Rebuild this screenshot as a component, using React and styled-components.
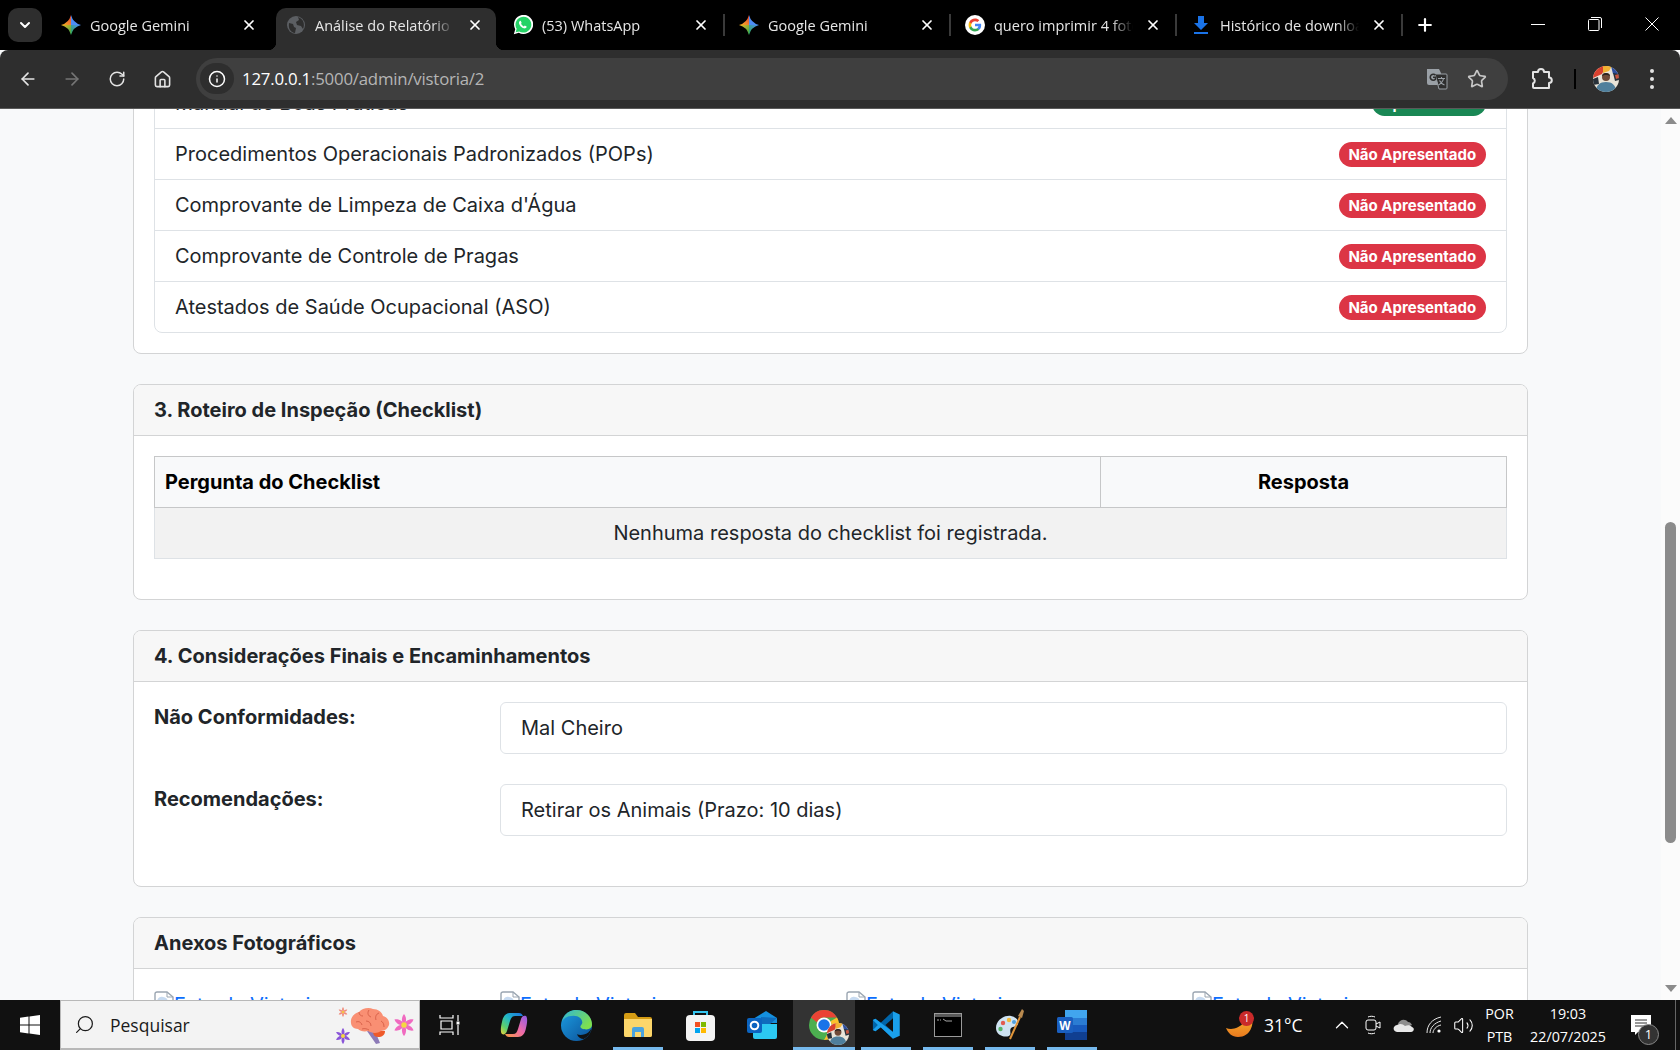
import React from "react";
import styled, { createGlobalStyle } from "styled-components";
import {
  ArrowLeft,
  ArrowRight,
  RotateCw,
  House,
  Star,
  ChevronDown,
  ChevronUp,
  X,
  Plus,
  Volume2,
  Search,
  Info,
} from "lucide-react";

const UI_FONT = `"Open Sans", "Noto Sans", "Liberation Sans", sans-serif`;

const GlobalStyle = createGlobalStyle`
  html, body {
    margin: 0;
    padding: 0;
    height: 100%;
    overflow: hidden;
    background: #f8f9fa;
  }
  * { box-sizing: border-box; }
`;

const GeminiIcon = () => (
  <svg width="21" height="22" viewBox="0 0 24 24">
    <defs>
      <linearGradient id="gemTL" x1="0" y1="1" x2="1" y2="0">
        <stop offset="0" stopColor="#f6b51e" />
        <stop offset="1" stopColor="#e8453c" />
      </linearGradient>
      <linearGradient id="gemBL" x1="0" y1="0" x2="1" y2="1">
        <stop offset="0" stopColor="#f6b51e" />
        <stop offset="1" stopColor="#2fa84f" />
      </linearGradient>
      <linearGradient id="gemBR" x1="1" y1="0" x2="0" y2="1">
        <stop offset="0" stopColor="#4c8df6" />
        <stop offset="1" stopColor="#2fa84f" />
      </linearGradient>
    </defs>
    <path fill="url(#gemTL)" d="M12 0Q9.500 9.500 0 12H12z" />
    <path fill="#4c8df6" d="M12 0Q14.500 9.500 24 12H12z" />
    <path fill="url(#gemBL)" d="M0 12Q9.500 14.500 12 24V12z" />
    <path fill="url(#gemBR)" d="M24 12Q14.500 14.500 12 24V12z" />
  </svg>
);

const GlobeIcon = () => (
  <svg width="20" height="20" viewBox="0 0 20 20">
    <circle cx="10" cy="10" r="9" fill="#5c5f63" />
    <path fill="#2e2e2e" d="M3 8l4 1 1 3 2 1-1 5c-4-.5-7-4-6-10zM12 2l1 3-3 2 1 3 4 1 2 3c2-4 1-10-5-12z" />
  </svg>
);

const WhatsAppIcon = () => (
  <svg width="20" height="20" viewBox="0 0 24 24">
    <path fill="#fff" d="M1 23l1.700-6A11.500 11.500 0 1 1 7 21.300z" />
    <path fill="#25d366" d="M3.200 20.800l1.200-4.200A9.500 9.500 0 1 1 7.500 19.700z" />
    <path fill="#fff" d="M9 7c-.4 0-1 .2-1.400.9-.7 1.100-.6 2.600.6 4.300 1.400 2 3 3.200 5 3.800 1.300.4 2.500-.2 3-1.200.2-.5.2-1 .1-1.100l-2.200-1.100-1 1.200c-1.500-.6-2.700-1.700-3.500-3.200l.8-1-1-2.400c-.1-.2-.3-.2-.4-.2z" />
  </svg>
);

const GoogleIcon = () => (
  <svg width="22" height="22" viewBox="0 0 24 24">
    <circle cx="12" cy="12" r="12" fill="#fff" />
    <g transform="translate(3.6 3.6) scale(.7)">
      <path fill="#4285F4" d="M22.56 12.25c0-.78-.07-1.53-.2-2.25H12v4.26h5.92c-.26 1.37-1.04 2.53-2.21 3.31v2.77h3.57c2.08-1.92 3.28-4.74 3.28-8.09z" />
      <path fill="#34A853" d="M12 23c2.97 0 5.46-.98 7.28-2.66l-3.57-2.77c-.98.66-2.23 1.06-3.71 1.06-2.86 0-5.29-1.93-6.16-4.53H2.18v2.84C3.99 20.53 7.7 23 12 23z" />
      <path fill="#FBBC05" d="M5.84 14.09c-.22-.66-.35-1.36-.35-2.09s.13-1.43.35-2.09V7.07H2.18C1.43 8.55 1 10.22 1 12s.43 3.45 1.18 4.93l3.66-2.84z" />
      <path fill="#EA4335" d="M12 5.38c1.62 0 3.06.56 4.21 1.64l3.15-3.15C17.45 2.09 14.97 1 12 1 7.7 1 3.99 3.47 2.18 7.07l3.66 2.84c.87-2.6 3.3-4.53 6.16-4.53z" />
    </g>
  </svg>
);

const DownloadIcon = () => (
  <svg width="18" height="20" viewBox="0 0 18 20">
    <path fill="#1a73e8" d="M6 1h6v7h4l-7 7-7-7h4zM2 17h14v2H2z" />
  </svg>
);

const TranslateIcon = () => (
  <svg width="22" height="22" viewBox="0 0 22 22">
    <path fill="#9aa0a6" d="M1 1h12l2 4v12H3a2 2 0 0 1-2-2z" />
    <path fill="#2e2e2e" stroke="#9aa0a6" strokeWidth="1" d="M9 6h11a1 1 0 0 1 1 1v13a1 1 0 0 1-1 1h-7z" />
    <path fill="none" stroke="#2e2e2e" strokeWidth="1.6" d="M9.5 7.2A3 3 0 1 0 9.5 11.2L9.5 9.3H7" />
    <path fill="none" stroke="#9aa0a6" strokeWidth="1.1" d="M12 10.5h7M15.5 9v1.5M17.5 10.5c-.5 3-2.5 5-5 6.5M13.5 12.5c1 2 2.5 3.5 5 4.5" />
  </svg>
);

const ExtensionIcon = () => (
  <svg width="24" height="24" viewBox="0 0 24 24" fill="none" stroke="#e3e3e3" strokeWidth="2" strokeLinejoin="round">
    <path d="M4 5h5a3 3 0 0 1 6 0h5v5.500a2.800 2.800 0 0 1 0 5.600V21H5a1 1 0 0 1-1-1v-3.500a3 3 0 0 0 0-5.500z" />
  </svg>
);

const Avatar = ({ size = 26 }) => (
  <svg width={size} height={size} viewBox="0 0 26 26">
    <defs>
      <clipPath id={`av${size}`}>
        <circle cx="13" cy="13" r="13" />
      </clipPath>
    </defs>
    <g clipPath={`url(#av${size})`}>
      <rect width="26" height="26" fill="#e9e4d8" />
      <path fill="#d9412f" d="M0 0h13L9 8 0 12z" />
      <path fill="#f2b233" d="M10 0h9l-3 5-6 2z" />
      <path fill="#2e4f9e" d="M18 0h8v9l-6-1z" />
      <path fill="#27313a" d="M20 7l6 1v6l-4 1zM0 13l5-2 1 7-6 1z" />
      <path fill="#c9553f" d="M22 9l4-1v4l-3 1z" />
      <circle cx="13" cy="11" r="4" fill="#6f4a38" />
      <path fill="#2b2320" d="M9 10c0-4 8-4 8 0-2-1.500-6-1.500-8 0z" />
      <path fill="#4f7f9c" d="M3 26c0-7 4-10 10-10s10 3 10 10z" />
    </g>
  </svg>
);

const WindowsLogo = () => (
  <svg width="20" height="20" viewBox="0 0 20 20">
    <path fill="#fff" d="M0 2.800l8.500-1.200v8H0zM9.500 1.400L20 0v9.600H9.500zM0 10.600h8.500v8L0 17.300zM9.500 10.600H20V20L9.500 18.600z" />
  </svg>
);

const Flower = ({ size, petal, core }) => (
  <svg width={size} height={size} viewBox="0 0 24 24">
    {[0, 60, 120, 180, 240, 300].map((a) => (
      <path key={a} fill={petal} transform={`rotate(${a} 12 12)`} d="M12 12C8.500 8 9.500 3 12 0c2.500 3 3.500 8 0 12z" />
    ))}
    <circle cx="12" cy="12" r="3" fill={core} />
  </svg>
);

const BrainIcon = () => (
  <svg width="42" height="38" viewBox="0 0 42 38">
    <path fill="#8d7bb8" d="M18 24l8 0 5 12-4 1z" />
    <path fill="#ef5a2a" d="M24 24h12c0 4-3 6-7 6s-5-3-5-6z" />
    <path fill="#f98f73" d="M2 16C1 10 6 6 10 5c3-4 10-5 14-3 5 0 9 3 10 7 4 1 7 5 6 9-1 3-4 6-8 6-4 3-10 2-13 0-4 1-8 0-10-2-4 0-7-3-7-6z" />
    <path fill="none" stroke="#d9634b" strokeWidth="1" d="M10 5c0 3 2 4 4 4M20 3c-2 3-1 6 2 7M30 6c-3 1-4 4-3 7M7 15c3-1 5 0 6 3M17 14c3 0 5 2 5 5M32 14c2 1 3 3 3 6M13 22c3-1 5 0 7 1" />
  </svg>
);

const TaskViewIcon = () => (
  <TaskViewGlyph width="22" height="20" viewBox="0 0 22 20" fill="none" stroke="#fff" strokeWidth="1.2">
    <path d="M1 0v3h13V0M1 20v-3h13v3M2 6h11v8H2z" />
    <path d="M19 0v6M19 10v10" />
    <rect x="17.5" y="6.5" width="3" height="3" fill="#fff" stroke="none" />
  </TaskViewGlyph>
);

const CopilotIcon = () => (
  <svg width="28" height="26" viewBox="0 0 28 26">
    <defs>
      <linearGradient id="co1" x1="1" y1="0" x2="0" y2="1">
        <stop offset="0" stopColor="#1b6fe0" />
        <stop offset="0.45" stopColor="#22b8c8" />
        <stop offset="0.75" stopColor="#5fce6a" />
        <stop offset="1" stopColor="#f4d43c" />
      </linearGradient>
      <linearGradient id="co2" x1="1" y1="0" x2="0" y2="1">
        <stop offset="0" stopColor="#f59a3f" />
        <stop offset="0.5" stopColor="#ef6ba8" />
        <stop offset="1" stopColor="#8f5be8" />
      </linearGradient>
    </defs>
    <path fill="url(#co1)" d="M2 10C3 4 6 1 10 1h9c2 0 3 1 4 3h-8c-3 0-4 2-5 5l-3 10c-1 3-3 4-5 3-2-2-1-8 0-12z" />
    <path fill="url(#co2)" transform="rotate(180 14 13)" d="M2 10C3 4 6 1 10 1h9c2 0 3 1 4 3h-8c-3 0-4 2-5 5l-3 10c-1 3-3 4-5 3-2-2-1-8 0-12z" />
  </svg>
);

const EdgeIcon = () => (
  <svg width="31" height="31" viewBox="0 0 32 32">
    <defs>
      <linearGradient id="ed1" x1="0" y1="0" x2="1" y2="1">
        <stop offset="0" stopColor="#1b9de2" />
        <stop offset="1" stopColor="#0c4f96" />
      </linearGradient>
      <linearGradient id="ed2" x1="0" y1="0" x2="1" y2="0.6">
        <stop offset="0" stopColor="#2fb5d6" />
        <stop offset="1" stopColor="#7ee04e" />
      </linearGradient>
    </defs>
    <circle cx="16" cy="16" r="16" fill="url(#ed1)" />
    <path fill="url(#ed2)" d="M1 12C3 4 9 0 16 0c9 0 16 7 16 15 0 3-2 5-6 5-3 0-6-1-6-3 0-1 2-2 2-4 0-4-4-7-9-7C7 6 3 8 1 12z" />
    <path fill="#111" d="M31.500 19c-1 5-4 9-8 11-3 0-6-2-7-5 2 1 5 1 8 0 3-1 5-3 7-6z" />
  </svg>
);

const FolderIcon = () => (
  <svg width="28" height="26" viewBox="0 0 28 26">
    <path fill="#d59c14" d="M0 3a2 2 0 0 1 2-2h9l3 4h12a2 2 0 0 1 2 2v16a2 2 0 0 1-2 2H2a2 2 0 0 1-2-2z" />
    <path fill="#fcd66b" d="M0 7h28v16a2 2 0 0 1-2 2H2a2 2 0 0 1-2-2z" />
    <path fill="#4aa3df" d="M8 17a2 2 0 0 1 2-2h8a2 2 0 0 1 2 2v8h-3v-5h-6v5H8z" />
  </svg>
);

const StoreIcon = () => (
  <svg width="29" height="31" viewBox="0 0 29 31">
    <path fill="none" stroke="#35c5f0" strokeWidth="2" d="M8 7V2h13v5" />
    <rect y="5" width="29" height="26" rx="4" fill="#f4f4f4" />
    <rect x="9" y="12" width="5" height="5" fill="#f25022" />
    <rect x="15" y="12" width="5" height="5" fill="#7fba00" />
    <rect x="9" y="18" width="5" height="5" fill="#00a4ef" />
    <rect x="15" y="18" width="5" height="5" fill="#ffb900" />
  </svg>
);

const OutlookIcon = () => (
  <svg width="30" height="28" viewBox="0 0 30 28">
    <path fill="#1490df" d="M6 8l13-8 11 7v5H6z" />
    <path fill="#0f6cbd" d="M14 6l16 1-8 7H14z" />
    <path fill="#2cc9f2" d="M6 13h24v13a2 2 0 0 1-2 2H8a2 2 0 0 1-2-2z" />
    <rect y="7" width="15" height="15" rx="2" fill="#0b64c0" />
    <circle cx="7.5" cy="14.5" r="3.8" fill="none" stroke="#fff" strokeWidth="2" />
  </svg>
);

const ChromeIcon = () => (
  <svg width="30" height="30" viewBox="0 0 30 30">
    <circle cx="15" cy="15" r="15" fill="#4caf50" />
    <path fill="#ea4335" d="M2 7.500A15 15 0 0 1 28 7.500H15a7.500 7.500 0 0 0-7 5z" />
    <path fill="#fbc02d" d="M28 7.500A15 15 0 0 1 15 30l6.500-11.300a7.500 7.500 0 0 0 0-7.500z" />
    <circle cx="15" cy="15" r="7.5" fill="#fff" />
    <circle cx="15" cy="15" r="5.8" fill="#1a73e8" />
  </svg>
);

const VsCodeIcon = () => (
  <svg width="30" height="30" viewBox="0 0 24 24">
    <path fill="#0065a9" d="M17.600 1L7.800 10.200 3.500 7 1.500 8v8l2 1 4.300-3.200L17.600 23V17.500L11.500 12l6.100-5.500z" />
    <path fill="#1aa0ec" d="M17.600 1l5.400 2.500v17L17.600 23zM1.500 8l2-1 14.100 10.500V23L7.800 13.800 3.500 17l-2-1 4-4z" />
  </svg>
);

const TerminalIcon = () => (
  <svg width="28" height="24" viewBox="0 0 28 24">
    <rect x=".5" y=".5" width="27" height="23" fill="#000" stroke="#9a9a9a" />
    <rect x="1" y="1" width="26" height="3" fill="#5a5a5a" />
    <path fill="none" stroke="#cfcfcf" strokeWidth=".8" d="M3 7h2M6 7h1M9 6l3 2h6" />
  </svg>
);

const PaintIcon = () => (
  <svg width="30" height="32" viewBox="0 0 30 32">
    <path fill="#cfe3f2" d="M1 19C1 11 9 6 16 7c5 1 8 4 7 8-1 3-5 2-7 4-2 3 1 6-2 8-5 2-13-1-13-8z" />
    <circle cx="8" cy="14" r="2.2" fill="#e25b4f" />
    <circle cx="14" cy="11" r="2.2" fill="#f2b83a" />
    <circle cx="5.5" cy="20" r="2.2" fill="#58b368" />
    <circle cx="19" cy="13" r="2" fill="#4f9fdc" />
    <path stroke="#e0953a" strokeWidth="2" d="M15 30L25 8" />
    <path fill="#b98a4f" d="M23 7l4-7 2 2-2 7z" />
  </svg>
);

const WordIcon = () => (
  <svg width="30" height="30" viewBox="0 0 30 30">
    <path fill="#41a5ee" d="M8 0h22v8H8z" />
    <path fill="#2b7cd3" d="M8 8h22v7H8z" />
    <path fill="#185abd" d="M8 15h22v7H8z" />
    <path fill="#103f91" d="M8 22h22v8H8z" />
    <rect y="7" width="16" height="16" rx="1.5" fill="#1a5fc0" />
    <text x="8" y="19.5" textAnchor="middle" fill="#fff" fontSize="12" fontWeight="700" fontFamily="Liberation Sans">W</text>
  </svg>
);

const WeatherIcon = () => (
  <svg width="28" height="24" viewBox="0 0 28 24">
    <defs>
      <linearGradient id="moon" x1="0" y1="0" x2="0" y2="1">
        <stop offset="0" stopColor="#f7b22d" />
        <stop offset="1" stopColor="#e9791e" />
      </linearGradient>
    </defs>
    <path fill="url(#moon)" d="M0 15c5 2 13 1 18-6 3-3 6-5 8-6 2 8-1 21-14 21C6 24 2 20 0 15z" />
  </svg>
);

const MeetIcon = () => (
  <svg width="16" height="20" viewBox="0 0 16 20" fill="none" stroke="#fff" strokeWidth="1">
    <rect x="1" y="5" width="10" height="10" rx="2" />
    <path d="M11 9l4-2v6l-4-2M3 2c2-1 5-1 7 0M3 18c2 1 5 1 7 0" />
  </svg>
);

const CloudIcon = () => (
  <svg width="21" height="14" viewBox="0 0 21 14">
    <path fill="#8e8e8e" d="M5 6c1-4 7-6 10-2 2 0 3 1 4 3l-8 3z" />
    <path fill="#e8e8e8" d="M4 14C0 14-1 8 4 7c3-2 6-1 8 1 3-1 5-1 7 1 3 1 2 5-1 5z" />
  </svg>
);

const WifiIcon = () => (
  <svg width="16" height="18" viewBox="0 0 16 18" fill="none" stroke="#e8e8e8" strokeWidth="1">
    <path d="M1 17C1 9 6 3 15 1M4 17c0-5 4-10 11-12M7 17c0-3 3-7 8-8" />
    <circle cx="13" cy="15" r="1.6" fill="#fff" stroke="none" />
  </svg>
);

const NotifIcon = () => (
  <svg width="20" height="20" viewBox="0 0 20 20">
    <path fill="#fff" d="M0 0h20v17H7l-3 3v-3H0z" />
    <path stroke="#333" strokeWidth="1" d="M4 5h12M4 8h12M4 11h12" />
  </svg>
);

const BrokenImage = () => (
  <svg width="20" height="20" viewBox="0 0 20 20">
    <path fill="#fff" stroke="#9aa5b1" strokeWidth="1.4" d="M1 3a2 2 0 0 1 2-2h10l6 5v13H1z" />
    <path fill="#c7daf0" d="M3 10c1-4 4-5 6-4 2 0 4 1 5 4z" />
    <path fill="none" stroke="#9aa5b1" d="M13 1v5h6" />
  </svg>
);

const ChromeApp = () => (
  <ChromeBadge>
    <ChromeIcon />
    <ChromeAvatar>
      <Avatar size={22} />
    </ChromeAvatar>
  </ChromeBadge>
);

const tabs = [
  { title: "Google Gemini", icon: <GeminiIcon /> },
  { title: "Análise do Relatório de Vistoria", icon: <GlobeIcon />, active: true },
  { title: "(53) WhatsApp", icon: <WhatsAppIcon />, sep: true },
  { title: "Google Gemini", icon: <GeminiIcon />, sep: true },
  { title: "quero imprimir 4 fotos em uma", icon: <GoogleIcon />, sep: true },
  { title: "Histórico de downloads", icon: <DownloadIcon />, sep: true },
];

const apps = [
  { icon: <TaskViewIcon /> },
  { icon: <CopilotIcon /> },
  { icon: <EdgeIcon /> },
  { icon: <FolderIcon />, open: true },
  { icon: <StoreIcon /> },
  { icon: <OutlookIcon /> },
  { icon: <ChromeApp />, open: true, active: true },
  { icon: <VsCodeIcon />, open: true },
  { icon: <TerminalIcon />, open: true },
  { icon: <PaintIcon />, open: true },
  { icon: <WordIcon />, open: true },
];

const documents = [
  ["Manual de Boas Práticas", true],
  ["Procedimentos Operacionais Padronizados (POPs)", false],
  ["Comprovante de Limpeza de Caixa d'Água", false],
  ["Comprovante de Controle de Pragas", false],
  ["Atestados de Saúde Ocupacional (ASO)", false],
];

const App = () => {
  return (
    <Screen>
      <GlobalStyle />
      <TabStrip>
        <TabMenu>
          <ChevronDown size={16} strokeWidth={3} color="#fff" />
        </TabMenu>
        {tabs.map((t, i) => (
          <Tab key={i} $active={t.active}>
            <TabIcon>{t.icon}</TabIcon>
            <TabTitle>{t.title}</TabTitle>
            <TabClose>
              <X size={16} strokeWidth={2.6} color="#fff" />
            </TabClose>
            {t.sep && <TabSeparator />}
          </Tab>
        ))}
        <NewTab>
          <Plus size={20} strokeWidth={2.6} color="#fff" />
        </NewTab>
        <WindowButtons>
          <WindowButton>
            <svg width="14" height="14" viewBox="0 0 14 14">
              <path stroke="#fff" d="M0 7.5h14" />
            </svg>
          </WindowButton>
          <WindowButton>
            <svg width="14" height="14" viewBox="0 0 14 14" fill="none" stroke="#fff">
              <rect x=".5" y="2.5" width="10.5" height="11" rx="1" />
              <path d="M3 .5h9a1.5 1.5 0 0 1 1.5 1.5v9" />
            </svg>
          </WindowButton>
          <WindowButton>
            <svg width="14" height="14" viewBox="0 0 14 14">
              <path stroke="#fff" d="M.5.5l13 13M13.5.5l-13 13" />
            </svg>
          </WindowButton>
        </WindowButtons>
      </TabStrip>

      <Toolbar>
        <NavButton $w={44}>
          <ArrowLeft size={20} strokeWidth={2} color="#e3e3e3" />
        </NavButton>
        <NavButton $w={44}>
          <ArrowRight size={20} strokeWidth={2} color="#757575" />
        </NavButton>
        <NavButton $w={46}>
          <RotateCw size={18} strokeWidth={2} color="#e3e3e3" />
        </NavButton>
        <NavButton $w={44}>
          <House size={19} strokeWidth={2} color="#e3e3e3" />
        </NavButton>
        <Omnibox>
          <SiteChip>
            <Info size={18} strokeWidth={2} color="#fff" />
          </SiteChip>
          <Url>
            <strong>127.0.0.1</strong>:5000/admin/vistoria/2
          </Url>
          <OmniIcon $right={60}>
            <TranslateIcon />
          </OmniIcon>
          <OmniIcon $right={21}>
            <Star size={20} strokeWidth={2} color="#c7c7c7" />
          </OmniIcon>
        </Omnibox>
        <ToolbarRight>
          <ToolSlot $w={66}>
            <ExtensionIcon />
          </ToolSlot>
          <ToolDivider />
          <ToolSlot $w={60}>
            <Avatar />
          </ToolSlot>
          <ToolDots>
            <span />
            <span />
            <span />
          </ToolDots>
        </ToolbarRight>
      </Toolbar>

      <Viewport>
        <Page>
          <Card>
            <CardBody>
              <DocList>
                {documents.map(([name, ok]) => (
                  <DocRow key={name}>
                    <span>{name}</span>
                    <Badge $ok={ok}>{ok ? "Apresentado" : "Não Apresentado"}</Badge>
                  </DocRow>
                ))}
              </DocList>
            </CardBody>
          </Card>

          <Card>
            <CardHeader>3. Roteiro de Inspeção (Checklist)</CardHeader>
            <CardBody>
              <ChecklistTable>
                <thead>
                  <tr>
                    <QuestionHead>Pergunta do Checklist</QuestionHead>
                    <AnswerHead>Resposta</AnswerHead>
                  </tr>
                </thead>
                <tbody>
                  <tr>
                    <EmptyCell colSpan={2}>Nenhuma resposta do checklist foi registrada.</EmptyCell>
                  </tr>
                </tbody>
              </ChecklistTable>
            </CardBody>
          </Card>

          <Card>
            <CardHeader>4. Considerações Finais e Encaminhamentos</CardHeader>
            <CardBody>
              <FieldGrid>
                <FieldLabel>Não Conformidades:</FieldLabel>
                <FieldValue>Mal Cheiro</FieldValue>
                <FieldLabel>Recomendações:</FieldLabel>
                <FieldValue>Retirar os Animais (Prazo: 10 dias)</FieldValue>
              </FieldGrid>
            </CardBody>
          </Card>

          <Card>
            <CardHeader>Anexos Fotográficos</CardHeader>
            <CardBody>
              <PhotoGrid>
                {[0, 1, 2, 3].map((i) => (
                  <PhotoLink key={i}>
                    <BrokenImage />
                    Foto da Vistoria
                  </PhotoLink>
                ))}
              </PhotoGrid>
            </CardBody>
          </Card>
        </Page>
        <ScrollTrack>
          <ScrollArrow />
          <ScrollThumb />
          <ScrollArrow $down />
        </ScrollTrack>
      </Viewport>

      <Taskbar>
        <StartButton>
          <WindowsLogo />
        </StartButton>
        <SearchBox>
          <SearchGlyph>
            <Search size={21} strokeWidth={1.4} color="#1a1a1a" />
          </SearchGlyph>
          <SearchText>Pesquisar</SearchText>
          <SearchArt>
            <ArtPiece $x={-3} $y={6}>
              <Flower size={10} petal="#f08a7a" core="#f4c542" />
            </ArtPiece>
            <ArtPiece $x={-6} $y={27}>
              <Flower size={16} petal="#8a55d8" core="#f4d742" />
            </ArtPiece>
            <ArtPiece $x={8} $y={6}>
              <BrainIcon />
            </ArtPiece>
            <ArtPiece $x={52} $y={13}>
              <Flower size={22} petal="#f06ac0" core="#f4d742" />
            </ArtPiece>
          </SearchArt>
        </SearchBox>
        <AppList>
          {apps.map((a, i) => (
            <AppButton key={i} $open={a.open} $active={a.active}>
              {a.icon}
            </AppButton>
          ))}
        </AppList>
        <Tray>
          <TraySlot $w={36}>
            <WeatherIcon />
            <WeatherBadge>1</WeatherBadge>
          </TraySlot>
          <TempSlot>31°C</TempSlot>
          <TraySlot $w={30}>
            <ChevronUp size={22} strokeWidth={1.4} color="#fff" />
          </TraySlot>
          <TraySlot $w={31}>
            <MeetIcon />
          </TraySlot>
          <TraySlot $w={30}>
            <CloudIcon />
          </TraySlot>
          <TraySlot $w={31}>
            <WifiIcon />
          </TraySlot>
          <TraySlot $w={29}>
            <Volume2 size={21} strokeWidth={1.2} color="#fff" />
          </TraySlot>
          <TrayText $w={43}>
            <span>POR</span>
            <span>PTB</span>
          </TrayText>
          <TrayText $w={94}>
            <span>19:03</span>
            <span>22/07/2025</span>
          </TrayText>
          <TraySlot $w={51}>
            <NotifIcon />
            <NotifBadge>1</NotifBadge>
          </TraySlot>
          <ShowDesktop />
        </Tray>
      </Taskbar>
    </Screen>
  );
};

export default App;

const Screen = styled.div`
  width: 1680px;
  height: 1050px;
  display: flex;
  flex-direction: column;
  overflow: hidden;
`;

const TabStrip = styled.div`
  height: 50px;
  flex: none;
  background: #000;
  display: flex;
  padding-left: 8px;
  font-family: ${UI_FONT};
`;

const TabMenu = styled.div`
  width: 34px;
  height: 34px;
  margin: 8px 5px 0 0;
  border-radius: 10px;
  background: #2e2e2e;
  display: flex;
  align-items: center;
  justify-content: center;
`;

const Tab = styled.div`
  position: relative;
  width: 226px;
  height: 42px;
  margin-top: 8px;
  padding: 0 14px 8px 14px;
  display: flex;
  align-items: center;
  color: #e6e6e6;
  font-size: 14.5px;

  ${(p) =>
    p.$active &&
    `
    background: #2e2e2e;
    margin-left: 3px;
    margin-right: 3px;
    width: 220px;
    padding-left: 10px;
    padding-right: 11px;
    border-radius: 10px 10px 0 0;
    &::before, &::after {
      content: "";
      position: absolute;
      bottom: 0;
      width: 8px;
      height: 8px;
    }
    &::before {
      left: -8px;
      background: radial-gradient(circle at 0 0, transparent 8px, #2e2e2e 8.5px);
    }
    &::after {
      right: -8px;
      background: radial-gradient(circle at 100% 0, transparent 8px, #2e2e2e 8.5px);
    }
  `}
`;

const TabIcon = styled.div`
  width: 20px;
  height: 22px;
  flex: none;
  display: flex;
  align-items: center;
  justify-content: center;
  margin-right: 9px;
`;

const TabTitle = styled.div`
  flex: none;
  width: 139px;
  white-space: nowrap;
  overflow: hidden;
  mask-image: linear-gradient(90deg, #000 calc(100% - 22px), transparent);
`;

const TabClose = styled.div`
  margin-left: auto;
  display: flex;
  margin-right: 2px;
`;

const TabSeparator = styled.div`
  position: absolute;
  right: 0;
  top: 6px;
  width: 2px;
  height: 22px;
  background: #3a3a3a;
`;

const NewTab = styled.div`
  width: 44px;
  display: flex;
  align-items: center;
  justify-content: center;
  padding-top: 0;
`;

const WindowButtons = styled.div`
  margin-left: auto;
  display: flex;
`;

const WindowButton = styled.div`
  width: 57px;
  height: 48px;
  display: flex;
  align-items: center;
  justify-content: center;
`;

const Toolbar = styled.div`
  height: 59px;
  flex: none;
  position: relative;
  background: #2e2e2e;
  border-radius: 8px 8px 0 0;
  border-bottom: 1px solid #5a5a5a;
  padding-left: 6px;
  display: flex;
  align-items: center;
  font-family: ${UI_FONT};
`;

const NavButton = styled.div`
  width: ${(p) => p.$w}px;
  height: 36px;
  display: flex;
  align-items: center;
  justify-content: center;
`;

const Omnibox = styled.div`
  position: relative;
  width: 1312px;
  height: 42px;
  margin-left: 12px;
  margin-top: -1px;
  border-radius: 21px;
  background: #3f3f3f;
  display: flex;
  align-items: center;
  padding-left: 4px;
`;

const SiteChip = styled.div`
  width: 34px;
  height: 31px;
  border-radius: 16px;
  background: #2e2e2e;
  display: flex;
  align-items: center;
  justify-content: center;
  margin-right: 8px;
`;

const Url = styled.div`
  font-size: 16.8px;
  color: #b5b5b5;
  letter-spacing: -0.2px;

  strong {
    font-weight: 400;
    color: #fff;
  }
`;

const OmniIcon = styled.div`
  position: absolute;
  top: 50%;
  right: ${(p) => p.$right}px;
  transform: translateY(-50%);
  display: flex;
`;

const ToolbarRight = styled.div`
  flex: 1;
  display: flex;
  align-items: center;
`;

const ToolSlot = styled.div`
  width: ${(p) => p.$w}px;
  display: flex;
  justify-content: center;
`;

const ToolDivider = styled.div`
  width: 2px;
  height: 20px;
  background: #000;
`;

const ToolDots = styled.div`
  display: flex;
  flex-direction: column;
  gap: 4px;
  margin-left: 14px;

  span {
    width: 4px;
    height: 4px;
    border-radius: 50%;
    background: #e3e3e3;
  }
`;

const Viewport = styled.div`
  flex: 1;
  min-height: 0;
  display: flex;
  overflow: hidden;
  background: #f8f9fa;
`;

const Page = styled.main`
  flex: 1;
  min-width: 0;
  padding: 0 133px;
  margin-top: -53px;
  font-family: Inter, "Liberation Sans", sans-serif;
  font-size: 20px;
  line-height: 30px;
  color: #212529;
`;

const Card = styled.section`
  background: #fff;
  border: 1px solid #d3d4d5;
  border-radius: 8px;
  margin-bottom: 30px;
  overflow: hidden;
`;

const CardHeader = styled.h5`
  margin: 0;
  padding: 10px 20px;
  height: 51px;
  font-size: 20px;
  line-height: 30px;
  font-weight: 700;
  background: #f7f7f7;
  border-bottom: 1px solid #d3d4d5;
`;

const CardBody = styled.div`
  padding: 20px;
`;

const DocList = styled.div`
  border: 1px solid #dee2e6;
  border-radius: 8px;
  overflow: hidden;
`;

const DocRow = styled.div`
  height: 51px;
  padding: 0 20px;
  display: flex;
  align-items: center;
  justify-content: space-between;
  border-bottom: 1px solid #dee2e6;

  &:last-child {
    border-bottom: 0;
    height: 50px;
  }
`;

const Badge = styled.span`
  height: 25px;
  padding: 0 9.75px;
  border-radius: 13px;
  font-size: 15px;
  line-height: 25px;
  font-weight: 700;
  color: #fff;
  background: ${(p) => (p.$ok ? "#198754" : "#dc3545")};
`;

const ChecklistTable = styled.table`
  width: 100%;
  border-collapse: collapse;
  margin-bottom: 20px;
  table-layout: fixed;
`;

const QuestionHead = styled.th`
  width: 946px;
  height: 51px;
  padding: 0 10px;
  background: #f8f9fa;
  border: 1px solid #c6c7c8;
  font-weight: 700;
  color: #000;
  text-align: left;
`;

const AnswerHead = styled(QuestionHead)`
  width: auto;
  text-align: center;
`;

const EmptyCell = styled.td`
  height: 51px;
  padding: 0 10px;
  background: #f2f2f2;
  border: 1px solid #dee2e6;
  text-align: center;
`;

const FieldGrid = styled.div`
  display: grid;
  grid-template-columns: 346px 1fr;
  row-gap: 30px;
  margin-bottom: 30px;
`;

const FieldLabel = styled.div`
  font-weight: 700;
  line-height: 30px;
`;

const FieldValue = styled.div`
  height: 52px;
  padding: 10px 20px;
  background: #fff;
  border: 1px solid #dee2e6;
  border-radius: 6px;
`;

const PhotoGrid = styled.div`
  display: grid;
  grid-template-columns: repeat(4, 346px);
`;

const PhotoLink = styled.a`
  display: flex;
  align-items: flex-start;
  color: #0d6efd;
  text-decoration: underline;
  line-height: 28px;
  padding-top: 2px;
`;

const ScrollTrack = styled.div`
  position: relative;
  width: 19px;
  flex: none;
  background: #fbfbfb;
  display: flex;
  flex-direction: column;
  align-items: center;
  justify-content: space-between;
  padding: 8px 0 8px;
`;

const ScrollArrow = styled.div`
  width: 0;
  height: 0;
  border-left: 6px solid transparent;
  border-right: 6px solid transparent;
  ${(p) => (p.$down ? "border-top: 7px solid #8b8b8b;" : "border-bottom: 7px solid #8b8b8b;")}
`;

const ScrollThumb = styled.div`
  position: absolute;
  left: 4px;
  top: 413px;
  width: 11px;
  height: 321px;
  border-radius: 6px;
  background: #8b8b8b;
`;

const Taskbar = styled.footer`
  height: 50px;
  flex: none;
  position: relative;
  background: #111;
  display: flex;
  color: #fff;
  font-family: ${UI_FONT};
`;

const StartButton = styled.div`
  width: 60px;
  display: flex;
  align-items: center;
  justify-content: center;
`;

const SearchBox = styled.div`
  position: relative;
  width: 360px;
  background: #f3f3f3;
  border: 1px solid #b8b8b8;
  border-bottom-width: 2px;
  display: flex;
  align-items: center;
  padding-left: 13px;
  color: #1a1a1a;
`;

const SearchGlyph = styled.div`
  display: flex;
  transform: scaleX(-1);
  margin-right: 15px;
`;

const SearchText = styled.div`
  font-size: 17.5px;
  font-weight: 400;
`;

const SearchArt = styled.div`
  position: absolute;
  left: 280px;
  top: 0;
  width: 76px;
  height: 47px;
`;

const ArtPiece = styled.div`
  position: absolute;
  left: ${(p) => p.$x}px;
  top: ${(p) => p.$y}px;
  display: flex;
`;

const AppList = styled.div`
  display: flex;
  margin-left: 1px;
`;

const AppButton = styled.div`
  position: relative;
  width: 62px;
  height: 50px;
  display: flex;
  align-items: center;
  justify-content: center;
  background: ${(p) => (p.$active ? "#333" : "transparent")};

  ${(p) =>
    p.$open &&
    `
    &::after {
      content: "";
      position: absolute;
      bottom: 0;
      left: ${p.$active ? 0 : 6}px;
      right: ${p.$active ? 0 : 6}px;
      height: 3px;
      background: #76b9ed;
    }
  `}
`;

const TaskViewGlyph = styled.svg`
  margin-right: 5px;
`;

const ChromeBadge = styled.div`
  position: relative;
  display: flex;
`;

const ChromeAvatar = styled.div`
  position: absolute;
  right: -10px;
  bottom: -5px;
  display: flex;
`;

const Tray = styled.div`
  margin-left: auto;
  width: 458px;
  display: flex;
`;

const TraySlot = styled.div`
  position: relative;
  width: ${(p) => p.$w}px;
  display: flex;
  align-items: center;
  justify-content: center;
`;

const WeatherBadge = styled.span`
  position: absolute;
  left: 17px;
  top: 11px;
  width: 15px;
  height: 15px;
  border-radius: 50%;
  background: #c92a2a;
  font-size: 10px;
  line-height: 15px;
  text-align: center;
`;

const TempSlot = styled.div`
  width: 69px;
  padding-left: 6px;
  font-size: 17.5px;
  line-height: 50px;
`;

const TrayText = styled.div`
  width: ${(p) => p.$w}px;
  display: flex;
  flex-direction: column;
  align-items: center;
  justify-content: center;
  gap: 1px;
  font-size: 14.3px;
  line-height: 22px;
`;

const NotifBadge = styled.span`
  position: absolute;
  left: 23px;
  top: 24px;
  width: 21px;
  height: 21px;
  border-radius: 50%;
  background: #333;
  border: 1px solid #888;
  font-size: 13px;
  line-height: 19px;
  text-align: center;
`;

const ShowDesktop = styled.div`
  width: 1px;
  margin-left: 9px;
  background: #666;
`;
